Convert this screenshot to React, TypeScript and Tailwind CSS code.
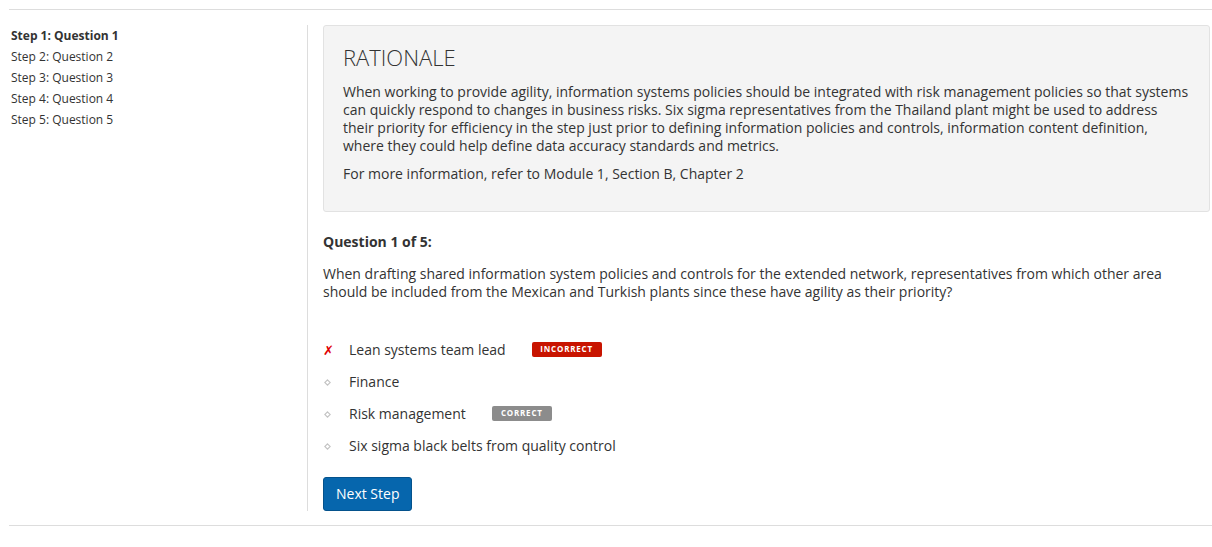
import React from "react";

const font = { fontFamily: '"Open Sans", "Noto Sans", sans-serif' };

function Bullet() {
  return (
    <svg width="7" height="7" viewBox="0 0 7 7" className="block">
      <path d="M3.5 0.8 L6.2 3.5 L3.5 6.2 L0.8 3.5 Z" fill="none" stroke="#c4c4c4" strokeWidth="1.1" />
    </svg>
  );
}

export default function App() {
  const steps = ["Step 1: Question 1", "Step 2: Question 2", "Step 3: Question 3", "Step 4: Question 4", "Step 5: Question 5"];
  const options: { text: string; mark: "x" | "b"; badge?: "incorrect" | "correct" }[] = [
    { text: "Lean systems team lead", mark: "x", badge: "incorrect" },
    { text: "Finance", mark: "b" },
    { text: "Risk management", mark: "b", badge: "correct" },
    { text: "Six sigma black belts from quality control", mark: "b" },
  ];
  return (
    <div className="bg-white w-[1212px] h-[547px] pl-[9px] text-[#333333]" style={font}>
      <div className="mt-[9px] border-t border-b border-[#dddddd] flex pt-[15px] pb-[14px]">
        <div className="w-[299px] shrink-0 border-r border-[#dddddd] pl-[2px]">
          {steps.map((s, i) => (
            <div key={s} className={`text-[12px] leading-[21px] ${i === 0 ? "font-bold" : ""}`}>
              {s}
            </div>
          ))}
        </div>
        <div className="flex-1 pl-[15px] pr-[2px]">
          <div className="bg-[#f4f4f4] border border-[#e2e2e2] rounded-[3px] pt-[19px] pb-[28px] px-[19px]">
            <div className="text-[22px] leading-[24px] font-light text-[#333]">RATIONALE</div>
            <p className="mt-[14px] text-[14px] leading-[18px]">
              When working to provide agility, information systems policies should be integrated with risk management policies so that systems can quickly respond to changes in business risks. Six sigma representatives from the Thailand plant might be used to address their priority for efficiency in the step just prior to defining information policies and controls, information content definition, where they could help define data accuracy standards and metrics.
            </p>
            <p className="mt-[10px] text-[14px] leading-[18px]">For more information, refer to Module 1, Section B, Chapter 2</p>
          </div>
          <div className="mt-[21px] text-[14px] leading-[18px] font-bold">Question 1 of 5:</div>
          <p className="mt-[14px] text-[14px] leading-[18px] pr-[30px]">
            When drafting shared information system policies and controls for the extended network, representatives from which other area should be included from the Mexican and Turkish plants since these have agility as their priority?
          </p>
          <div className="mt-[33px] flex flex-col">
            {options.map((o) => (
              <div key={o.text} className="flex items-center h-[32px]">
                <div className="w-[26px] flex items-center">
                  {o.mark === "x" ? (
                    <span className="text-[#e00000] text-[13px] font-bold leading-none" style={{ fontFamily: '"DejaVu Sans", sans-serif' }}>✗</span>
                  ) : (
                    <span className="ml-[1px]"><Bullet /></span>
                  )}
                </div>
                <span className="text-[14px] leading-[18px]">{o.text}</span>
                {o.badge === "incorrect" && (
                  <span className="ml-[26px] bg-[#c81400] text-white text-[8px] font-bold tracking-[0.8px] w-[70px] h-[15px] flex items-center justify-center rounded-[2px] -mt-[2px]">
                    INCORRECT
                  </span>
                )}
                {o.badge === "correct" && (
                  <span className="ml-[26px] bg-[#8c8c8c] text-white text-[8px] font-bold tracking-[0.8px] w-[60px] h-[15px] flex items-center justify-center rounded-[2px] -mt-[2px]">
                    CORRECT
                  </span>
                )}
              </div>
            ))}
          </div>
          <button className="mt-[15px] h-[34px] px-[12px] bg-[#0666ad] border border-[#04528c] rounded-[3px] text-white text-[14px] leading-[18px]">
            Next Step
          </button>
        </div>
      </div>
    </div>
  );
}
